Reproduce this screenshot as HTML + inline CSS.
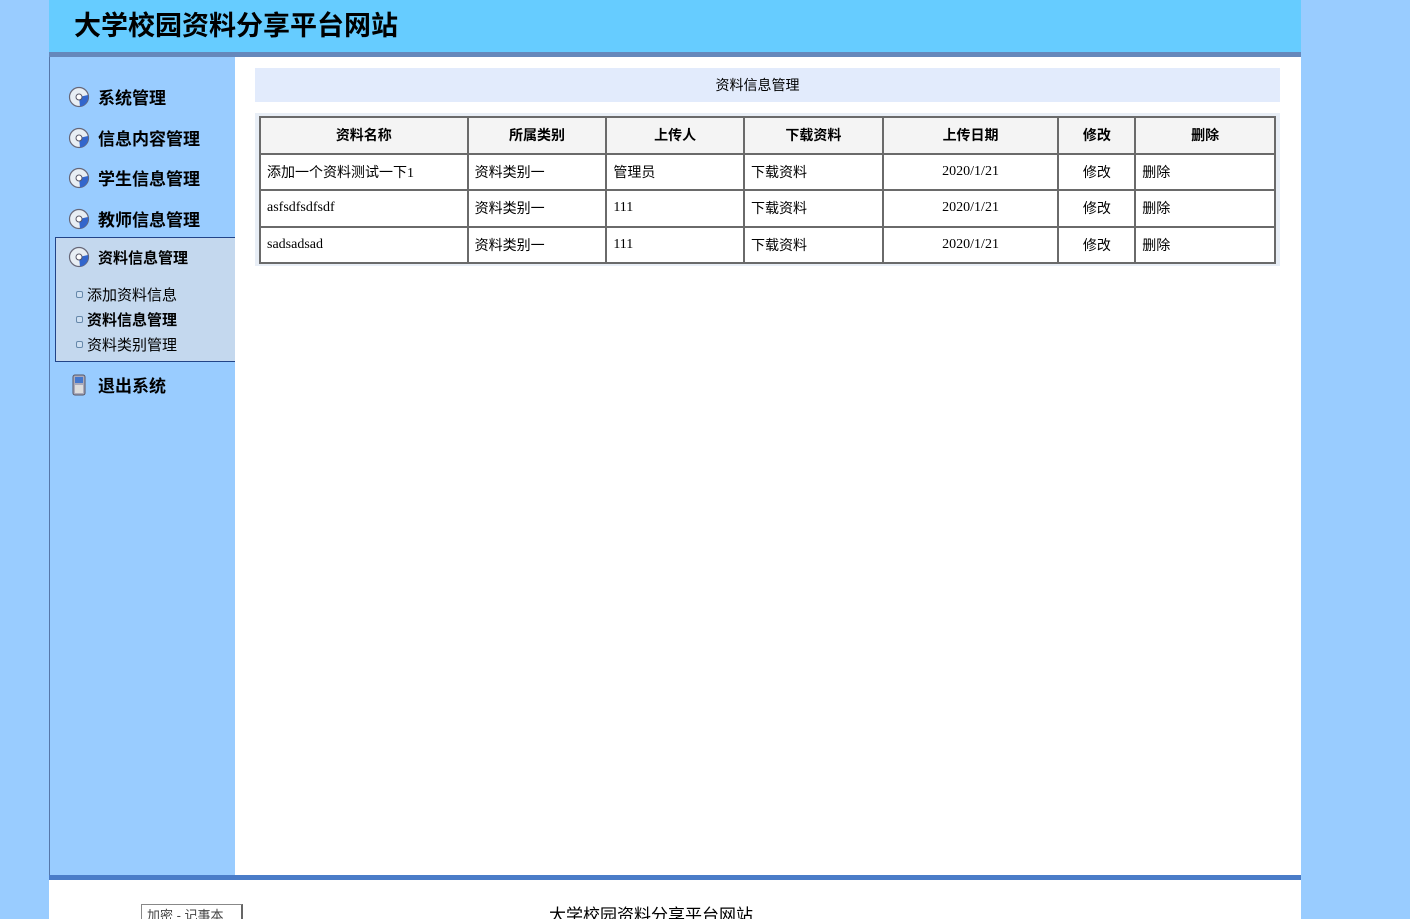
<!DOCTYPE html>
<html><head><meta charset="utf-8"><style>
*{margin:0;padding:0;box-sizing:border-box}
html{height:919px;overflow:hidden}
body{width:1410px;height:919px;background:#99ccff;position:relative;overflow:hidden;font-family:"Liberation Sans","Noto Sans CJK SC",sans-serif;font-size:14px;color:#000}
.abs{position:absolute}
.hdr{left:49px;top:0;width:1252px;height:52px;background:#66ccff}
.hdr h1{position:absolute;left:25px;top:4px;font-size:27px;font-weight:bold;letter-spacing:0}
.hbar{left:49px;top:52px;width:1252px;height:5px;background:#6688bb}
.side{left:49px;top:57px;width:186px;height:818px;background:#99ccff;border-left:1px solid #5577aa}
.content{left:235px;top:57px;width:1066px;height:818px;background:#fff}
.m{position:absolute;left:18px;font-size:17px;font-weight:bold;display:flex;align-items:center;gap:8px}
.ico{width:22px;height:22px}
.sub{position:absolute;left:5px;top:180px;width:181px;height:125px;background:#c4d8ee;border:1px solid #224488;border-right:none}
.si{position:absolute;left:20px;font-size:14px;display:flex;align-items:center;gap:4px}
.dot{width:7px;height:7px;border:1px solid #6688aa;border-radius:2px;background:#cfe0f2}
.title{left:255px;top:68px;width:1025px;height:34px;background:#e2ebfc;text-align:center;line-height:34px;font-size:14px;padding-right:20px}
.tbox{left:255px;top:113px;width:1025px;height:153px;background:#e8eef6}
table{position:absolute;left:4px;top:3px;border-collapse:collapse;width:1017px;background:#fff}
td,th{border:2px solid #6a6a6a;height:36.5px;font-size:14px;font-family:"Liberation Serif","Noto Sans CJK SC",serif;padding:0 6px;text-align:left;background:#fff;vertical-align:middle}
th{background:#f4f4f4;text-align:center;font-family:"Liberation Sans","Noto Sans CJK SC",sans-serif}
.c{text-align:center}
.fbar{left:49px;top:875px;width:1252px;height:5px;background:#4a7cc8}
.foot{left:49px;top:880px;width:1252px;height:39px;background:#fff;overflow:hidden}
</style></head><body>
<div class="abs hdr"><h1>大学校园资料分享平台网站</h1></div>
<div class="abs hbar"></div>
<div class="abs side">
<svg width="0" height="0" style="position:absolute"><defs><g id="cd"><circle cx="11" cy="11" r="9.5" fill="#e8eef4" stroke="#667" stroke-width="1.2"/><path d="M11 11 L20 9 A9.5 9.5 0 0 1 12 20.5 Z" fill="#3366cc"/><circle cx="11" cy="11" r="3" fill="#fff" stroke="#556" stroke-width="1"/></g></defs></svg>
<div class="m" style="top:27px"><svg class="ico"><use href="#cd"/></svg>系统管理</div>
<div class="m" style="top:68px"><svg class="ico"><use href="#cd"/></svg>信息内容管理</div>
<div class="m" style="top:108px"><svg class="ico"><use href="#cd"/></svg>学生信息管理</div>
<div class="m" style="top:149px"><svg class="ico"><use href="#cd"/></svg>教师信息管理</div>
<div class="sub">
<div class="m" style="top:8px;left:12px;font-size:15px"><svg class="ico"><use href="#cd"/></svg>资料信息管理</div>
<div class="si" style="top:46px;font-size:15px"><span class="dot"></span>添加资料信息</div>
<div class="si" style="top:71px;font-weight:bold;font-size:15px"><span class="dot"></span>资料信息管理</div>
<div class="si" style="top:96px;font-size:15px"><span class="dot"></span>资料类别管理</div>
</div>
<div class="m" style="top:315px"><svg class="ico" viewBox="0 0 22 22"><rect x="5" y="1" width="12" height="20" rx="2" fill="#aab" stroke="#556"/><rect x="7" y="3" width="8" height="6" fill="#4477cc"/><rect x="7" y="11" width="8" height="8" fill="#ddd"/></svg>退出系统</div>
</div>
<div class="abs content"></div>
<div class="abs title">资料信息管理</div>
<div class="abs tbox"><table>
<colgroup><col style="width:208px"><col style="width:139px"><col style="width:138px"><col style="width:139px"><col style="width:176px"><col style="width:77px"><col style="width:140px"></colgroup>
<tr><th>资料名称</th><th>所属类别</th><th>上传人</th><th>下载资料</th><th>上传日期</th><th>修改</th><th>删除</th></tr>
<tr><td>添加一个资料测试一下1</td><td>资料类别一</td><td>管理员</td><td>下载资料</td><td class="c">2020/1/21</td><td class="c">修改</td><td>删除</td></tr>
<tr><td>asfsdfsdfsdf</td><td>资料类别一</td><td>111</td><td>下载资料</td><td class="c">2020/1/21</td><td class="c">修改</td><td>删除</td></tr>
<tr><td>sadsadsad</td><td>资料类别一</td><td>111</td><td>下载资料</td><td class="c">2020/1/21</td><td class="c">修改</td><td>删除</td></tr>
</table></div>
<div class="abs fbar"></div>
<div class="abs foot">
<div class="abs" style="left:92px;top:24px;width:102px;height:20px;border:1px solid #888;border-right:2px solid #666;font-size:13px;color:#444;padding-left:5px;background:#fff">加密 - 记事本</div>
<div class="abs" style="left:500px;top:21px;font-size:17px">大学校园资料分享平台网站</div>
</div>
</body></html>
